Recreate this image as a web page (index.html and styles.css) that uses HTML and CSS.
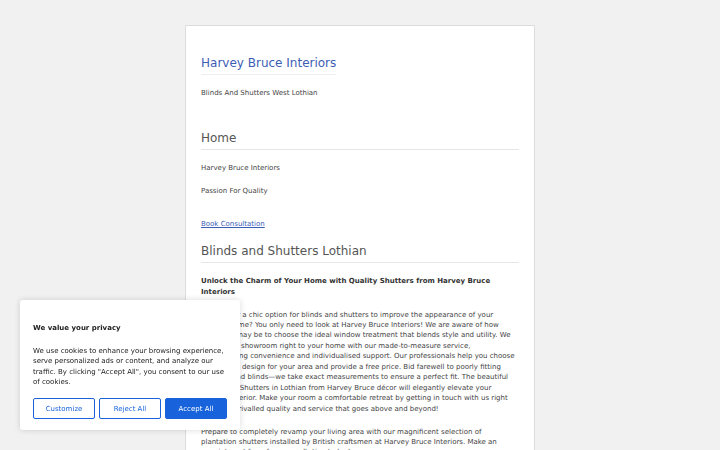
FILE: index.html
```html
<!DOCTYPE html>
<html>
<head>
<meta charset="utf-8">
<link rel="stylesheet" href="styles.css">
</head>
<body>
<main class="page">
  <header class="site-head">
    <h1 class="site-title"><a href="#">Harvey Bruce Interiors</a></h1>
    <p class="tagline">Blinds And Shutters West Lothian</p>
  </header>
  <section class="block block-home">
    <h2 class="heading">Home</h2>
    <p>Harvey Bruce Interiors</p>
    <p>Passion For Quality</p>
    <p class="cta"><a href="#">Book Consultation</a></p>
  </section>
  <section class="block block-blinds">
    <h2 class="heading">Blinds and Shutters Lothian</h2>
    <p class="lead">Unlock the Charm of Your Home with Quality Shutters from Harvey Bruce Interiors</p>
    <p class="body-text">Looking for a chic option for blinds and shutters to improve the appearance of your Lothian home? You only need to look at Harvey Bruce Interiors! We are aware of how difficult it may be to choose the ideal window treatment that blends style and utility. We deliver our showroom right to your home with our made-to-measure service, guaranteeing convenience and individualised support. Our professionals help you choose the perfect design for your area and provide a free price. Bid farewell to poorly fitting shutters and blinds—we take exact measurements to ensure a perfect fit. The beautiful Blinds and Shutters in Lothian from Harvey Bruce décor will elegantly elevate your house's interior. Make your room a comfortable retreat by getting in touch with us right now for unrivalled quality and service that goes above and beyond!</p>
    <p class="body-text">Prepare to completely revamp your living area with our magnificent selection of plantation shutters installed by British craftsmen at Harvey Bruce Interiors. Make an appointment for a free consultation today!</p>
  </section>
</main>
<div class="cookie">
  <p class="cookie-title">We value your privacy</p>
  <p class="cookie-text">We use cookies to enhance your browsing experience, serve personalized ads or content, and analyze our traffic. By clicking "Accept All", you consent to our use of cookies.</p>
  <div class="cookie-actions">
    <button class="btn btn-outline">Customize</button>
    <button class="btn btn-outline">Reject All</button>
    <button class="btn btn-fill">Accept All</button>
  </div>
</div>
</body>
</html>
```
FILE: styles.css
```css
html, body {
  margin: 0;
  padding: 0;
}
body {
  background: #f1f1f1;
  font-family: "DejaVu Sans", sans-serif;
  color: #444;
  font-size: 7px;
  line-height: 10.5px;
}
.page {
  width: 318px;
  margin: 25px auto 0;
  background: #fff;
  border: 1px solid #dcdcdc;
  padding: 29px 15px 20px;
}
.site-title {
  margin: 0;
  font-size: 12px;
  line-height: 16px;
  font-weight: normal;
  display: inline-block;
  border-bottom: 1px solid #eee;
  padding-bottom: 3px;
}
.site-title a {
  color: #3d5db5;
  text-decoration: none;
}
.tagline {
  margin: 13px 0 0;
}
.block-home {
  margin-top: 31px;
}
.block-blinds {
  margin-top: 14px;
}
.heading {
  margin: 0;
  font-size: 12px;
  line-height: 16px;
  font-weight: normal;
  color: #555;
  border-bottom: 1px solid #e6e6e6;
  padding-bottom: 3px;
}
.block p {
  margin: 12.5px 0 0;
}
.block .heading + p {
  margin-top: 13px;
}
.block p.cta {
  margin-top: 22.5px;
}
.block p.body-text {
  line-height: 10.45px;
}
.cta a {
  color: #3d5db5;
}
.lead {
  font-weight: bold;
  color: #333;
}
.cookie {
  position: fixed;
  left: 20px;
  bottom: 20px;
  width: 194px;
  padding: 13px 13px 11px;
  background: #fff;
  box-shadow: 0 0 6px rgba(0,0,0,0.15);
  border-radius: 3px;
  color: #212121;
}
.cookie-title {
  margin: 10px 0 0;
  font-weight: bold;
  font-size: 7px;
}
.cookie-text {
  margin: 12.5px 0 0;
  line-height: 10.6px;
}
.cookie-actions {
  display: flex;
  gap: 4px;
  margin-top: 10px;
}
.btn {
  font-family: "DejaVu Sans", sans-serif;
  font-size: 7px;
  height: 21px;
  flex: 1;
  border: 1.5px solid #1863dc;
  border-radius: 2px;
  cursor: pointer;
  padding: 0;
}
.btn-outline {
  background: #fff;
  color: #1863dc;
}
.btn-fill {
  background: #1863dc;
  color: #fff;
}
```
